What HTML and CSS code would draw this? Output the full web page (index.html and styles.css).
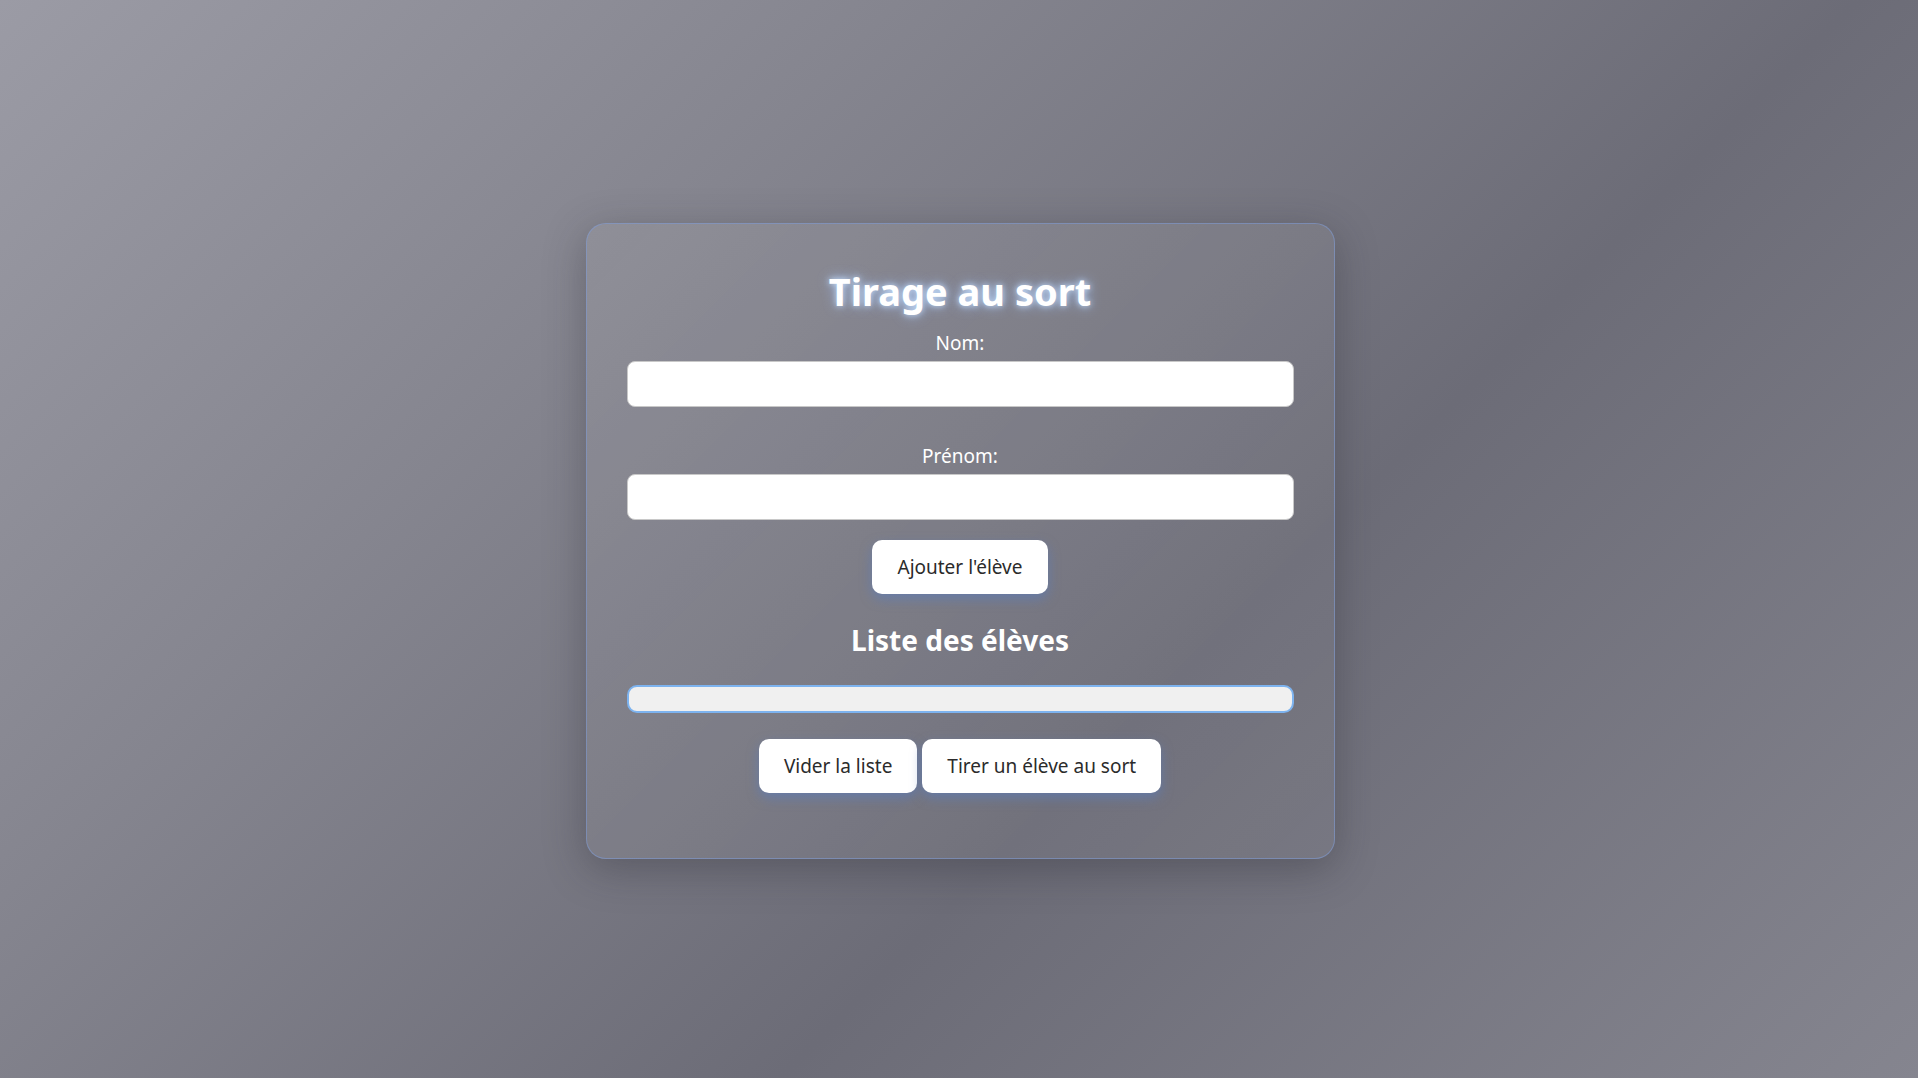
FILE: index.html
```html
<!DOCTYPE html>
<html lang="fr">
<head>
<meta charset="utf-8">
<title>Tirage au sort</title>
<link rel="stylesheet" href="styles.css">
</head>
<body>
<main class="page">
  <section class="card">
    <h1 class="title">Tirage au sort</h1>
    <label class="label" for="nom">Nom:</label>
    <input class="field" id="nom" type="text">
    <label class="label label-second" for="prenom">Prénom:</label>
    <input class="field" id="prenom" type="text">
    <div class="actions actions-add">
      <button class="btn btn-add" type="button">Ajouter l'élève</button>
    </div>
    <h2 class="subtitle">Liste des élèves</h2>
    <div class="list"></div>
    <div class="actions actions-bottom">
      <button class="btn btn-clear" type="button">Vider la liste</button>
      <button class="btn btn-draw" type="button">Tirer un élève au sort</button>
    </div>
  </section>
</main>
</body>
</html>
```
FILE: styles.css
```css
* { box-sizing: border-box; }

html, body {
  margin: 0;
  height: 100%;
}

body {
  font-family: "Noto Sans", "Open Sans", sans-serif;
  background: linear-gradient(135deg, #9b9ba5 0%, #85858f 30%, #6c6c77 62%, #85858f 100%);
  color: #fff;
}

.page {
  min-height: 100%;
  display: flex;
  justify-content: center;
  align-items: flex-start;
  padding: 223px 0 0 2px;
}

.card {
  width: 749px;
  padding: 40px 40px 65px;
  border: 1px solid rgba(125, 155, 215, 0.55);
  border-radius: 20px;
  background: linear-gradient(135deg, rgba(255,255,255,0.07), rgba(255,255,255,0.03));
  box-shadow: 0 10px 40px rgba(40, 40, 50, 0.35);
  display: flex;
  flex-direction: column;
  align-items: stretch;
  text-align: center;
}

.title {
  margin: 0 0 2px;
  padding-top: 1px;
  font-size: 38px;
  font-weight: 700;
  color: #fff;
  text-shadow: 0 0 6px rgba(200, 225, 255, 0.95), 0 0 14px rgba(160, 195, 255, 0.8);
}

.label {
  display: block;
  margin-top: 11px;
  margin-bottom: 5px;
  font-size: 19px;
  color: #fff;
}

.label-second {
  margin-top: 36px;
}

.field {
  display: block;
  width: 100%;
  height: 46px;
  border: 1px solid #c8c8c8;
  border-radius: 8px;
  background: #fff;
  font-size: 18px;
  padding: 0 12px;
}

.actions {
  display: flex;
  justify-content: center;
  gap: 5px;
}

.actions-add {
  margin-top: 20px;
}

.actions-bottom {
  margin-top: 26px;
}

.btn {
  height: 54px;
  padding: 0 25px;
  border: none;
  border-radius: 10px;
  background: #fff;
  color: #2b2b2b;
  font-family: "Noto Sans", "Open Sans", sans-serif;
  font-size: 19px;
  box-shadow: 0 5px 12px rgba(90, 125, 190, 0.6);
}

.subtitle {
  margin: 27px 0 0;
  font-size: 28px;
  font-weight: 700;
  color: #fff;
}

.list {
  margin-top: 26px;
  height: 28px;
  border: 2px solid #7db3ef;
  border-radius: 10px;
  background: #f0f0f0;
}
```
